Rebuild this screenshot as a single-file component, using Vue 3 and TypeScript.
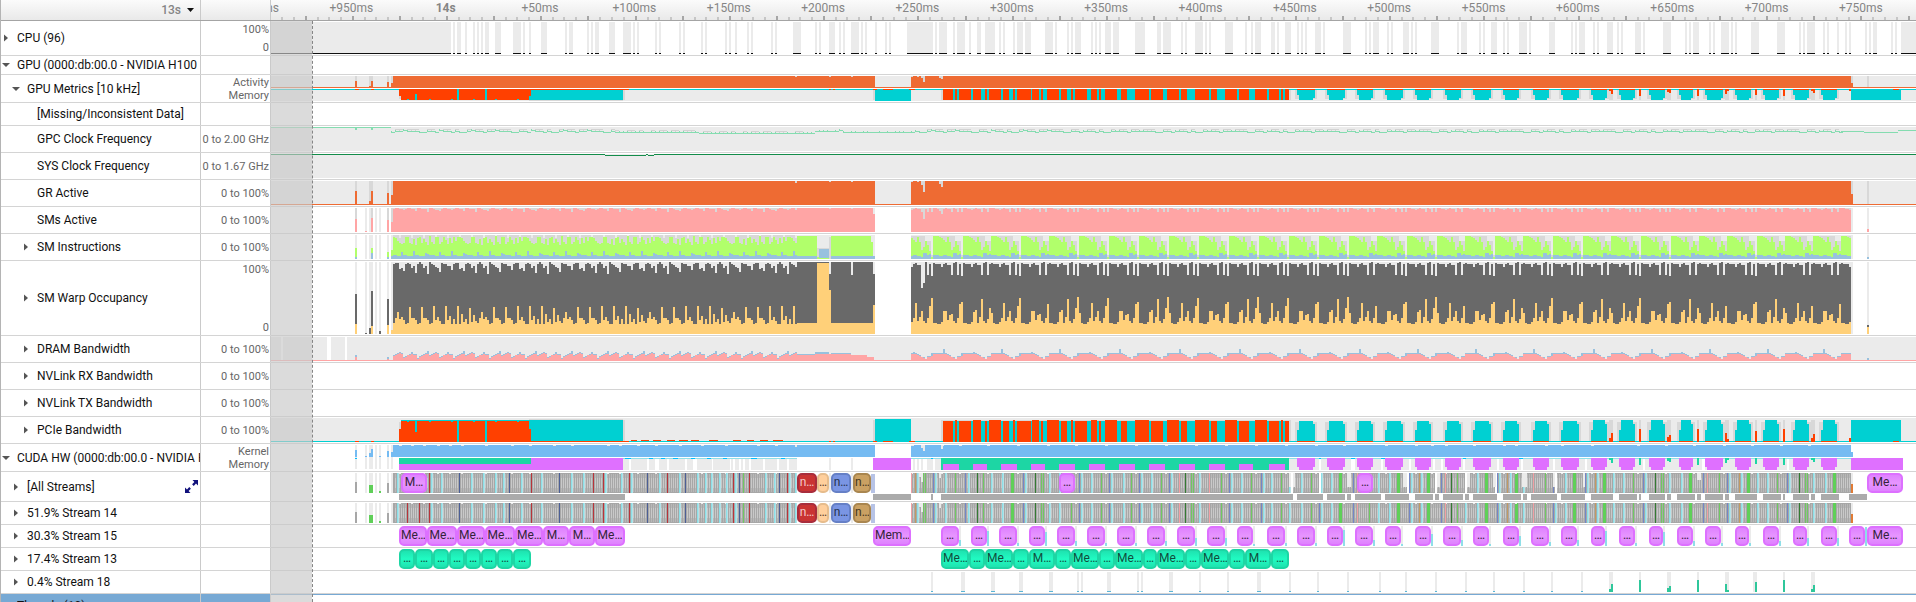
<script setup lang="ts">
interface Layer { fill: string; d: string }
interface Chip { x: number; end: number; text: string; kind: string; top: number }
interface Lane {
  id: string
  label: string
  depth: number
  toggle: '' | 'open' | 'closed'
  range: string[]
  height: number
  layers: Layer[]
  chips: Chip[]
}
interface Segment { from: number; to: number; red: boolean }

// Time axis in trace units: the visible window spans START..END.
const START = 271
const END = 1916
const SPAN = END - START
const BIN = 2

const LIGHT = '#ebebeb'
const SHADE = '#d8d8d8'
const ORANGE = '#ee6b33'
const PINK = '#ffa5a5'
const LIME = '#b1ff6b'
const STEEL = '#98c1de'
const DARK = '#696969'
const AMBER = '#ffd079'
const CYAN = '#00d0d2'
const RED = '#ff4000'
const SKY = '#75bbf2'
const VIOLET = '#df70ff'
const MINT = '#1dd6a4'
const AQUA = '#8fdfe8'

const box = (x: number, y: number, w: number, h: number): string => `M${x - START} ${y}h${w}v${h}h${-w}z`
const spans = (pairs: number[], y: number, h: number): string => {
  let d = ''
  for (let i = 0; i < pairs.length; i += 2) d += box(pairs[i], y, pairs[i + 1] - pairs[i], h)
  return d
}
const ticksAt = (xs: number[], w: number, y: number, h: number): string => xs.map(x => box(x, y, w, h)).join('')
const column = (x: number, base: number, h: number): string => (h > 0 ? box(x, base - h, BIN, h) : '')
const pick = (list: number[], i: number): number => list[((i % list.length) + list.length) % list.length]

// ---- CPU utilisation -------------------------------------------------
const cpuBusy: number[] = [
  271, 451, 453, 455, 457, 461, 465, 467, 473, 475, 477, 479, 481, 483, 485, 489, 495, 501, 513, 521, 523, 525,
  529, 531, 541, 547, 565, 567, 569, 573, 587, 589, 591, 593, 595, 599, 609, 615, 623, 631, 633, 635, 637, 639,
  655, 657, 659, 661, 679, 681, 683, 685, 701, 703, 705, 707, 725, 727, 729, 731, 735, 737, 747, 749, 751, 753,
  771, 773, 775, 777, 793, 801, 815, 817, 819, 821, 829, 835, 839, 841, 843, 845, 851, 859, 861, 863, 865, 867,
  875, 877, 885, 887, 889, 891, 907, 933, 935, 937, 939, 947, 953, 955, 957, 965, 969, 971, 977, 981, 985, 995,
  999, 1001, 1003, 1005, 1013, 1015, 1017, 1023, 1025, 1031, 1045, 1053, 1055, 1057, 1067, 1069, 1071, 1073,
  1075, 1081, 1091, 1093, 1095, 1097, 1099, 1101, 1105, 1111, 1113, 1119, 1135, 1145, 1157, 1161, 1163, 1171,
  1181, 1183, 1185, 1187, 1195, 1203, 1205, 1207, 1209, 1211, 1225, 1233, 1245, 1247, 1251, 1253, 1255, 1261,
  1271, 1275, 1277, 1279, 1285, 1291, 1297, 1299, 1301, 1303, 1305, 1307, 1315, 1321, 1323, 1325, 1343, 1351,
  1365, 1367, 1369, 1371, 1373, 1379, 1387, 1389, 1391, 1393, 1403, 1409, 1411, 1413, 1415, 1417, 1431, 1439,
  1457, 1459, 1461, 1467, 1479, 1481, 1483, 1485, 1491, 1497, 1503, 1505, 1507, 1509, 1519, 1527, 1529, 1531,
  1549, 1555, 1571, 1573, 1575, 1577, 1579, 1585, 1593, 1595, 1597, 1599, 1607, 1613, 1617, 1619, 1621, 1623,
  1635, 1641, 1643, 1645, 1663, 1671, 1685, 1687, 1689, 1691, 1693, 1699, 1709, 1711, 1713, 1715, 1721, 1729,
  1731, 1733, 1735, 1737, 1751, 1759, 1777, 1785, 1799, 1801, 1803, 1805, 1807, 1815, 1823, 1825, 1827, 1829,
  1837, 1839, 1845, 1847, 1849, 1851, 1865, 1867, 1869, 1871, 1873, 1877, 1891, 1893, 1895, 1897, 1901, 1916,
]

// ---- Iteration structure ---------------------------------------------
const steps: number[] = [
  903, 933, 963, 991, 1021, 1049, 1079, 1109, 1139, 1169, 1199, 1229, 1259, 1289, 1319, 1349, 1377, 1407, 1437,
  1465, 1495, 1523, 1553, 1583, 1611, 1641, 1671, 1699, 1727, 1757, 1785, 1813, 1841, 1871,
]
const decodeBins: { x: number; i: number; n: number }[] = []
for (let n = 0; n < steps.length - 1; n++) {
  for (let x = steps[n]; x < steps[n + 1]; x += BIN) {
    if (x >= 911 && x < 1851) decodeBins.push({ x, i: (x - steps[n]) / BIN, n })
  }
}
const warmBins: { x: number; i: number }[] = []
for (let x = 393; x < 797; x += BIN) warmBins.push({ x, i: (x - 393) / BIN })

const startup: number[] = [355, 365, 369, 371, 375, 379, 387, 391]
const startupWide = spans([355, 357, 365, 367, 369, 373, 375, 377, 379, 381, 387, 389, 391, 393], 0, 24)

const warmDrop = [1, 0, 0, 1, 1, 2, 1, 0, 0, 1, 1, 3, 0, 0, 1, 1, 1, 4, 0, 0, 1, 2, 2, 3]
const decodeDrop = [0, 0, 1, 1, 2, 1, 0, 1, 1, 4, 0, 1, 4, 0, 4]
const warmGreen = [22, 21, 18, 16, 15, 16, 22, 22, 16, 15, 20, 14, 21, 22, 16, 20, 17, 14, 23, 17, 15, 22, 22, 15, 17, 22, 19, 15, 21, 16, 22, 18, 22]
const decodeGreen = [23, 23, 23, 22, 21, 19, 17, 22, 17, 9, 12, 18, 14, 8, 2]
const warmBlue = [4, 4, 3, 3, 7, 4, 4, 3, 3, 3, 8, 4, 4, 3, 3, 3, 6, 5, 4]
const decodeBlue = [4, 4, 4, 3, 3, 4, 4, 3, 3, 2, 6, 6, 4, 5, 0]

const grBase = box(271, 23, 1645, 1)
const grBody = (h: number): string => {
  let d = box(393, 0, 482, h) + box(911, 0, 940, h) + box(1851, h * 0.55, 2, h * 0.45) + box(1853, h - 1, 63, 1)
  d += column(355, h, h * 0.6) + column(371, h, h * 0.6) + column(369, h, h * 0.15) + column(387, h, h * 0.5) + column(391, h, h * 0.4)
  return d
}
const grNotch = (h: number): string =>
  [[795, 2], [829, 1], [851, 1], [911, 1], [917, 1], [921, 4], [923, 11], [939, 3], [941, 6]]
    .map(([x, v]) => box(x, 0, BIN, Math.ceil((v * h) / 24))).join('')

const smsPink = warmBins.map(b => column(b.x, 24, 24 - pick(warmDrop, b.i))).join('')
  + box(797, 0, 76, 24) + box(873, 6, 2, 18)
  + decodeBins.map(b => column(b.x, 24, 24 - pick(decodeDrop, b.i))).join('')
  + column(355, 24, 13) + column(371, 24, 14) + column(387, 24, 12) + column(391, 24, 10) + column(365, 24, 1) + column(1867, 24, 3)

const lime = warmBins.map(b => column(b.x, 24, pick(warmGreen, b.i))).join('')
  + box(797, 1, 20, 23) + box(817, 22, 12, 2) + box(831, 1, 40, 23) + box(871, 7, 2, 17)
  + decodeBins.map(b => column(b.x, 24, pick(decodeGreen, b.i))).join('')
  + column(355, 24, 11) + column(371, 24, 11) + column(387, 24, 7) + column(391, 24, 9)
const steel = warmBins.map(b => column(b.x, 24, pick(warmBlue, b.i))).join('')
  + box(797, 21, 20, 3) + box(819, 14, 10, 9) + box(831, 21, 44, 3)
  + decodeBins.map(b => column(b.x, 24, pick(decodeBlue, b.i))).join('')
  + column(355, 24, 2) + column(371, 24, 6) + column(387, 24, 2) + column(391, 24, 3) + column(1867, 24, 2)

const WARP = 72
const warmDark = [2, 1, 1, 7, 6, 9, 2, 1, 2, 6, 4, 11, 2, 0, 2, 6, 4, 12, 0, 2, 3, 5, 6, 10, 1, 2, 2, 4, 4, 8]
const warmAmber = [11, 16, 22, 15, 17, 14, 10, 11, 27, 16, 16, 14, 10, 11, 27, 16, 16, 14, 10, 11, 28, 14, 17, 13, 10, 10, 28, 14, 18, 10, 15, 10, 28, 10, 20, 12, 15, 10, 26, 12, 19, 13]
const decodeDark = [1, 2, 2, 2, 5, 2, 1, 3, 3, 13, 1, 0, 13, 2, 14]
const decodeAmber: number[][] = [
  [21, 11, 10, 10, 12, 16, 31, 13, 17, 23, 13, 11, 16, 28, 36],
  [11, 11, 10, 10, 12, 23, 23, 14, 19, 20, 13, 11, 16, 30, 32],
  [11, 11, 10, 10, 12, 22, 24, 11, 17, 35, 13, 11, 15, 26, 37],
]
const warpDark = warmBins.map(b => column(b.x, WARP, WARP - pick(warmDark, b.i))).join('')
  + box(797, 0, 76, WARP) + box(873, 12, 2, 60)
  + decodeBins.map(b => column(b.x, WARP, WARP - pick(decodeDark, b.i) - (b.x === 923 ? 20 : 0))).join('')
  + column(355, WARP, 40) + column(371, WARP, 43) + column(387, WARP, 35) + column(369, WARP, 6) + column(365, WARP, 1) + column(379, WARP, 3) + column(1867, WARP, 9)
const warpAmber = warmBins.map(b => column(b.x, WARP, pick(warmAmber, b.i))).join('')
  + box(797, 61, 76, 11) + box(817, 1, 12, 71) + box(829, 28, 2, 44) + box(873, 43, 2, 29)
  + decodeBins.map(b => column(b.x, WARP, pick(decodeAmber[b.n % 3], b.i))).join('')
  + column(355, WARP, 10) + column(371, WARP, 8) + column(387, WARP, 9) + column(391, WARP, 4) + column(1867, WARP, 7)

const dramTotal = [6, 7, 8, 9, 8, 4, 5, 6, 7, 9, 7, 7, 3, 5, 6, 7, 8, 10]
const dramPink = [5, 6, 7, 8, 7, 3, 4, 6, 6, 7, 6, 6, 2, 4, 5, 6, 7, 7]
const decodeDramT = [8, 8, 8, 8, 8, 9, 8, 7, 6, 4, 4, 2, 5, 5, 8]
const decodeDramP = [7, 7, 7, 7, 7, 7, 7, 6, 5, 4, 3, 2, 4, 4, 5]
const dramBlue = warmBins.map(b => column(b.x, 24, pick(dramTotal, b.i))).join('')
  + box(797, 17, 40, 7) + box(815, 15, 14, 9) + box(831, 16, 20, 2)
  + decodeBins.map(b => column(b.x, 24, pick(decodeDramT, b.i) + (b.i === 5 && b.n % 2 ? 3 : 0))).join('')
  + column(355, 24, 6) + column(387, 24, 4) + column(1867, 24, 3)
const dramBody = box(271, 23, 1645, 1) + warmBins.map(b => column(b.x, 24, pick(dramPink, b.i))).join('')
  + box(797, 18, 40, 6) + box(815, 17, 36, 7) + box(851, 18, 16, 6) + box(867, 20, 7, 4)
  + decodeBins.map(b => column(b.x, 24, pick(decodeDramP, b.i))).join('')
  + column(355, 24, 4) + column(387, 24, 2)

// ---- Clock frequencies -----------------------------------------------
const wave = [5, 4, 4, 3, 4, 4, 4, 5, 5, 4, 4, 5, 3, 4, 4, 5, 4, 5, 5, 4, 3, 4, 4]
let gpcLine = box(271, 0, 120, 1) + box(355, 0, 2, 3) + box(371, 0, 2, 3)
let gpcShade = ''
for (let x = 391, i = 0; x < 1841; x += 4, i++) {
  const flat = (x > 697 && x < 815) ? 6 : (x > 817 && x < 833) ? 4 : (x >= 843 && x < 911) ? 5 : (x > 611 && x < 697) ? 5 : x > 1080 ? 4 + (pick(wave, i) > 4 ? 1 : 0) : pick(wave, i)
  gpcLine += box(x, flat, 4, 1)
  if (pick(wave, i) === 4 && (x < 800 || x > 920)) gpcShade += box(x, flat - 2, 4, 1) + box(x, flat - 2, 1, 2)
  if (pick(wave, i) !== pick(wave, i - 1)) gpcLine += box(x, flat - 1, 1, 2)
}
gpcLine += box(1841, 4, 23, 1) + box(1864, 5, 34, 1) + box(1898, 3, 18, 1)

// ---- PCIe traffic ----------------------------------------------------
const mixRed: number[] = [
  943, 953, 955, 957, 959, 971, 973, 981, 985, 987, 989, 1001, 1003, 1009, 1013, 1015, 1017, 1031, 1032, 1039,
  1041, 1043, 1047, 1059, 1061, 1067, 1071, 1073, 1075, 1087, 1091, 1097, 1099, 1101, 1105, 1117, 1121, 1127,
  1135, 1149, 1151, 1163, 1167, 1179, 1181, 1187, 1195, 1209, 1211, 1217, 1225, 1237, 1239, 1249, 1255, 1267,
  1269, 1279, 1281, 1283, 1285, 1289,
]
const blocks: number[][] = [
  [1297, 1315], [1327, 1345], [1357, 1373], [1385, 1403], [1415, 1431], [1445, 1461], [1473, 1491], [1503, 1519],
  [1533, 1549], [1561, 1579], [1591, 1607], [1619, 1635], [1649, 1665], [1679, 1693], [1705, 1723], [1735, 1751],
  [1763, 1779], [1793, 1809], [1821, 1837],
]
const smallRed: number[][] = [
  [1609, 4], [1611, 9], [1639, 13], [1667, 5], [1669, 7], [1697, 13], [1725, 9], [1727, 3], [1755, 11], [1783, 13], [1811, 4], [1813, 8],
]
// One builder serves both the full lane (bars grow upward) and the summary lane (bars hang down).
const pcie = (h: number, up: boolean): Layer[] => {
  const k = h / 24
  const bar = (x: number, w: number, v: number): string => {
    const s = Math.round(v * k)
    return up ? box(x, h - s, w, s) : box(x, 0, w, s)
  }
  const base = up ? h - 1 : 0
  let shade = bar(399, 2, 20) + bar(529, 94, 23) + bar(623, 2, 22) + bar(873, 2, 22) + bar(941, 350, 22)
  let cyan = box(271, base, 1645, 1) + bar(401, 130, 22) + bar(531, 92, 22) + bar(875, 36, 23) + bar(943, 346, 21) + bar(1851, 50, 22)
  let red = bar(399, 2, 13) + bar(1849, 2, 4)
  for (let x = 401; x < 529; x += BIN) if (x !== 457 && x !== 485) red += bar(x, BIN, x === 415 ? 10 : 21 - ((x * 7) % 11 === 0 ? 1 : 0))
  red += bar(529, 2, 13)
  for (let i = 0; i < mixRed.length; i += 2) red += bar(mixRed[i], mixRed[i + 1] - mixRed[i], i % 4 ? 22 : 21)
  for (const [a, b] of blocks) {
    shade += bar(a - 2, b - a + 4, 20)
    cyan += bar(a, 2, 12) + bar(a + 2, b - a - 4, b > 1590 ? 22 : 21) + bar(b - 2, 2, 18)
    red += box(a, base, b - a, 1)
  }
  for (const [x, v] of smallRed) {
    shade += bar(x, 2, 22)
    red += bar(x, 2, v)
  }
  cyan += [961, 989, 999, 1037, 1049, 1079, 1167, 1237].map(x => bar(x, 2, 6)).join('')
  red += spans([531, 629, 829, 831, 833, 835, 873, 877, 883, 893, 909, 915, 355, 359, 371, 374, 1893, 1899], base, 1)
  if (up) red += spans([631, 637, 641, 649, 653, 661, 667, 675, 679, 688, 691, 699, 709, 718, 733, 741, 747, 754, 760, 768, 773, 783], h - 2, 1)
  return [{ fill: LIGHT, d: box(271, 0, 1645, h) }, { fill: SHADE, d: shade }, { fill: CYAN, d: cyan }, { fill: RED, d: red }]
}

// ---- CUDA kernel / memory summary ------------------------------------
const chipsB: number[] = [
  941, 959, 971, 987, 999, 1017, 1029, 1045, 1057, 1075, 1087, 1105, 1117, 1135, 1147, 1165, 1177, 1195, 1207,
  1225, 1237, 1253, 1267, 1285,
]
const chipsC: number[] = [
  1297, 1315, 1327, 1343, 1355, 1373, 1385, 1401, 1415, 1431, 1443, 1461, 1473, 1489, 1503, 1519, 1531, 1549,
  1561, 1577, 1591, 1605, 1619, 1635, 1649, 1663, 1677, 1693, 1705, 1721, 1735, 1749, 1763, 1779, 1793, 1807,
  1821, 1837, 1849, 1865,
]
const kernelNotches: number[] = [399, 411, 423, 437, 449, 461, 485, 511, 529, 553, 571, 607, 619, 637, 655, 679, 701, 725, 757, 775, 911, 941, 959, 987, 1017, 1047, 1075, 1105, 1135, 1165, 1195, 1225, 1255, 1285, 1315, 1343, 1385, 1415, 1431, 1445, 1473, 1503, 1515, 1545, 1561, 1591, 1637, 1665, 1693, 1723, 1751, 1780, 1808]
const cudaLayers: Layer[] = [
  { fill: LIGHT, d: startupWide + spans([623, 629, 631, 647, 649, 655, 659, 667, 669, 685, 687, 693, 697, 712, 713, 730, 731, 733, 735, 739, 741, 743, 745, 749, 751, 763, 765, 777, 779, 787, 789, 797, 829, 831, 851, 853, 873, 875, 913, 915, 917, 919, 921, 923, 927, 933, 935, 941, 1289, 1319, 1321, 1351, 1355, 1381, 1383, 1409, 1411, 1433, 1435, 1441, 1443, 1463, 1465, 1497, 1499, 1521, 1523, 1553, 1555, 1585, 1587, 1643, 1645, 1702, 1705, 1787, 1789, 1867, 1851, 1853], 13, 12) },
  { fill: SKY, d: box(393, 0, 482, 12) + box(911, 0, 940, 12) + box(1851, 7, 2, 5) + column(355, 12, 7) + column(369, 12, 4) + column(371, 12, 8) + column(387, 12, 6) + column(391, 12, 5) + column(365, 12, 1) + column(379, 12, 1) },
  { fill: LIGHT, d: ticksAt(kernelNotches, 3, 0, 1) + box(795, 0, 2, 2) + box(921, 0, 2, 3) + box(923, 0, 2, 6) + box(941, 0, 2, 4) },
  { fill: AQUA, d: box(623, 13, 174, 1) + box(911, 13, 30, 1) + box(1289, 13, 562, 1) },
  { fill: '#00bfff', d: spans([355, 357, 625, 631, 649, 653, 661, 665, 673, 678, 691, 695, 707, 711, 723, 727, 751, 757, 781, 785, 931, 933, 1319, 1321, 1351, 1355, 1381, 1385, 1463, 1466, 1519, 1523], 13, 1) },
  { fill: VIOLET, d: box(399, 19, 132, 6) + box(531, 13, 92, 12) + box(873, 13, 38, 12) + box(1851, 13, 52, 12) + blocks.map(([a, b]) => box(a, 13, b - a, 9) + box(a + 2, 13, b - a - 4, 12)).join('') },
  { fill: MINT, d: box(399, 13, 132, 6) + box(941, 13, 348, 12) + smallRed.map(([x, v]) => box(x, 13, 2, Math.round(v / 2))).join('') },
  { fill: VIOLET, d: spans(chipsB.map((x, i) => (i % 2 ? x : x + 2)), 19, 6) },
  { fill: MINT, d: box(961, 13, 10, 11) },
]

// ---- Streams ---------------------------------------------------------
const marks: Record<string, number[]> = {
  '#8ce0e8': [397, 431, 441, 471, 483, 495, 503, 521, 541, 571, 583, 605, 621, 631, 659, 679, 697, 705, 711, 719, 726, 735, 765, 774, 789, 795, 917, 935, 945, 968, 991, 1002, 1025, 1049, 1059, 1081, 1091, 1111, 1123, 1141, 1151, 1171, 1199, 1231, 1241, 1263, 1271, 1289, 1301, 1321, 1331, 1378, 1389, 1411, 1421, 1465, 1477, 1499, 1510, 1523, 1555, 1565, 1587, 1597, 1613, 1623, 1645, 1669, 1681, 1729, 1741, 1757, 1767, 1789, 1813, 1825],
  '#b8343a': [407, 419, 429, 531, 593, 603, 629, 667, 733, 749, 787],
  '#4c5f96': [459, 509, 559, 647, 685, 739, 779],
  '#6fca60': [743, 923, 925, 955, 983, 1041, 1043, 1071, 1101, 1131, 1161, 1191, 1193, 1221, 1251, 1281, 1311, 1369, 1457, 1545, 1633, 1661, 1663, 1719, 1777, 1805, 1807],
  '#7386c8': [933, 965, 1023, 1079, 1109, 1139, 1169, 1229, 1261, 1319, 1353, 1409, 1441, 1497, 1553, 1585, 1643, 1703, 1727, 1787],
  '#f1a0a4': [911, 1179, 1209, 1357, 1445, 1533, 1707],
  '#c29a62': [915, 1419, 1507, 1595, 1739],
  '#347b32': [977, 1035, 1185, 1451, 1655, 1799],
}
const greenWide: number[] = [1011, 1339, 1397, 1427, 1485, 1515, 1573, 1603, 1689, 1747, 1833]
const stripes: number[] = []
for (let x = 395; x < 1851; x += 2) if (x < 797 || x > 911) stripes.push(x)
const streamBase = (gaps: boolean): Layer[] => {
  const out: Layer[] = [
    { fill: LIGHT, d: spans([355, 357, 365, 367, 369, 373, 375, 377, 379, 381, 387, 389, 391, 393, 829, 831, 851, 853, 1851, 1853], 0, 20) },
    { fill: '#a7a7a7', d: box(393, 0, 404, 20) + box(911, 0, 940, 20) + column(355, 20, 11) + column(387, 20, 10) },
    { fill: '#b8b8b8', d: ticksAt(stripes, 1, 1, 18) },
    { fill: '#c9c9c9', d: ticksAt(stripes, 1, 5, 10) },
    { fill: '#5fcf58', d: box(369, 12, 4, 8) + box(379, 18, 2, 2) + ticksAt(greenWide, 3, 0, 20) },
    { fill: LIGHT, d: ticksAt(kernelNotches, 2, 0, 1) + box(919, 0, 2, 4) + box(921, 0, 3, 9) + box(939, 0, 2, 5) },
  ]
  for (const fill of Object.keys(marks)) out.push({ fill, d: ticksAt(marks[fill], 1, 0, 20) })
  out.push({ fill: '#b3e2e8', d: ticksAt(marks['#8ce0e8'].map(x => x + 1), 1, 0, 20) })
  out.push({ fill: '#e07b35', d: box(1851, 11, 2, 9) })
  out.push({ fill: '#b7c3e6', d: box(871, 1, 4, 19) })
  if (gaps) {
    out.push({ fill: '#ffffff', d: spans([1291, 1293, 1319, 1321, 1407, 1409, 1435, 1437, 1465, 1467, 1495, 1497, 1555, 1557], 0, 20) })
    out.push({ fill: LIGHT, d: spans([1289, 1291, 1293, 1295, 1347, 1351, 1403, 1407, 1437, 1440, 1467, 1470, 1493, 1496, 1522, 1527, 1553, 1555, 1583, 1585], 0, 14) + box(1697, 0, 4, 7) })
  }
  return out
}
const bars: number[] = [
  399, 625, 873, 911, 931, 933, 941, 1293, 1297, 1323, 1327, 1345, 1347, 1351, 1355, 1381, 1385, 1409, 1415, 1433,
  1435, 1439, 1443, 1463, 1465, 1469, 1473, 1497, 1503, 1521, 1523, 1527, 1531, 1557, 1561, 1585, 1591, 1613, 1619,
  1637, 1639, 1641, 1649, 1665, 1667, 1671, 1677, 1695, 1697, 1701, 1705, 1723, 1725, 1729, 1735, 1757, 1763, 1781,
  1783, 1785, 1793, 1809, 1811, 1815, 1821, 1839, 1849, 1867,
]

const chain = (edges: number[], texts: string[], kind: string): Chip[] =>
  texts.map((text, i) => ({ x: edges[i], end: edges[i + 1], text, kind, top: 1 }))
const separate = (pairs: number[], kind: string): Chip[] => {
  const out: Chip[] = []
  for (let i = 0; i < pairs.length; i += 2) out.push({ x: pairs[i], end: pairs[i + 1], text: '…', kind, top: 1 })
  return out
}
const kernelChips: Chip[] = [
  { x: 797, end: 817, text: 'n…', kind: 'crimson', top: 1 },
  { x: 817, end: 829, text: '…', kind: 'peach', top: 1 },
  { x: 831, end: 851, text: 'n…', kind: 'blue', top: 1 },
  { x: 853, end: 871, text: 'n…', kind: 'tan', top: 1 },
]
const allChips: Chip[] = [
  { x: 401, end: 427, text: 'M…', kind: 'violet', top: 1 },
  ...kernelChips,
  { x: 1059, end: 1075, text: '…', kind: 'violet', top: 1 },
  { x: 1357, end: 1373, text: '…', kind: 'violet', top: 1 },
  { x: 1867, end: 1903, text: 'Me…', kind: 'violet', top: 1 },
]
const copyChips: Chip[] = [
  ...chain([399, 427, 457, 485, 515, 543, 569, 595, 625], ['Me…', 'Me…', 'Me…', 'Me…', 'Me…', 'M…', 'M…', 'Me…'], 'violet'),
  { x: 873, end: 911, text: 'Mem…', kind: 'violet', top: 1 },
  ...separate(chipsB, 'violet'),
  ...separate(chipsC, 'violet'),
  { x: 1867, end: 1903, text: 'Me…', kind: 'violet', top: 1 },
]
const mintChips: Chip[] = [
  ...chain([399, 415, 433, 449, 465, 481, 497, 513, 531], Array<string>(8).fill('…'), 'mint'),
  ...chain(
    [941, 969, 985, 1013, 1029, 1055, 1071, 1099, 1115, 1143, 1157, 1185, 1201, 1229, 1245, 1271, 1289],
    ['Me…', '…', 'Me…', '…', 'M…', '…', 'Me…', '…', 'Me…', '…', 'Me…', '…', 'Me…', '…', 'M…', '…'], 'mint'),
]
const tails = [...chipsB, ...chipsC].filter((_, i) => i % 2 === 1 && i < 62)
const tailHeights = [6, 15, 3, 14, 5, 3, 3, 5, 8, 8, 2, 3, 3, 16, 6, 2, 12, 6, 2, 10, 4]
const s18Light: number[] = [931, 933, 961, 965, 991, 995, 1019, 1023, 1049, 1053, 1077, 1079, 1081, 1083, 1107, 1111, 1137, 1139, 1141, 1143, 1169, 1173, 1199, 1201, 1227, 1229, 1257, 1261, 1289, 1291, 1317, 1319, 1347, 1349, 1379, 1381, 1405, 1407, 1435, 1437, 1465, 1467, 1493, 1495, 1523, 1525, 1551, 1553, 1581, 1583, 1609, 1613, 1639, 1641, 1667, 1671, 1697, 1699, 1725, 1729, 1753, 1757, 1783, 1785, 1811, 1815]

const lane = (
  id: string, label: string, depth: number, toggle: Lane['toggle'], range: string[], height: number,
  layers: Layer[] = [], chips: Chip[] = [],
): Lane => ({ id, label, depth, toggle, range, height, layers, chips })

const lanes: Lane[] = [
  lane('cpu', 'CPU (96)', 0, 'closed', ['100%', '0'], 35, [
    { fill: LIGHT, d: spans(cpuBusy, 0, 32) }, { fill: '#111', d: spans(cpuBusy, 31, 1) }]),
  lane('gpu', 'GPU (0000:db:00.0 - NVIDIA H100', 0, 'open', [], 19),
  lane('metrics', 'GPU Metrics [10 kHz]', 1, 'open', ['Activity', 'Memory'], 28, [
    { fill: LIGHT, d: box(271, 0, 1645, 12) },
    { fill: SHADE, d: spans([355, 357, 369, 373, 387, 389, 391, 393, 1851, 1853, 1867, 1869], 0, 12) },
    { fill: ORANGE, d: grBody(12) + box(271, 11, 1645, 1) },
    { fill: SHADE, d: grNotch(12) }]),
  lane('missing', '[Missing/Inconsistent Data]', 2, '', [], 23),
  lane('gpc', 'GPC Clock Frequency', 2, '', ['0 to 2.00 GHz'], 27, [
    { fill: LIGHT, d: box(271, 0, 1645, 24) }, { fill: '#d2d2d2', d: gpcShade }, { fill: '#84dcb0', d: gpcLine }]),
  lane('sys', 'SYS Clock Frequency', 2, '', ['0 to 1.67 GHz'], 27, [
    { fill: LIGHT, d: box(271, 0, 1645, 24) },
    { fill: '#128c49', d: box(271, 0, 334, 1) + box(605, 1, 41, 1) + box(646, 0, 2, 1) + box(648, 1, 6, 1) + box(654, 0, 1262, 1) }]),
  lane('gr', 'GR Active', 2, '', ['0 to 100%'], 27, [
    { fill: LIGHT, d: box(271, 0, 1645, 24) },
    { fill: SHADE, d: spans([355, 357, 369, 373, 387, 389, 391, 393, 1851, 1853, 1867, 1869], 0, 24) },
    { fill: ORANGE, d: grBase + grBody(24) }, { fill: SHADE, d: grNotch(24) }]),
  lane('sms', 'SMs Active', 2, '', ['0 to 100%'], 27, [
    { fill: LIGHT, d: startupWide + box(871, 0, 4, 24) + box(1851, 0, 2, 24) + box(1867, 0, 2, 24) },
    { fill: SHADE, d: box(393, 0, 478, 24) + box(911, 0, 940, 24) + ticksAt([355, 371, 387, 391], 2, 0, 24) },
    { fill: PINK, d: smsPink },
    { fill: SHADE, d: grNotch(24) }]),
  lane('smi', 'SM Instructions', 2, 'closed', ['0 to 100%'], 27, [
    { fill: LIGHT, d: startupWide + box(393, 0, 482, 24) + box(911, 0, 942, 24) + box(1867, 0, 2, 24) },
    { fill: SHADE, d: warmBins.map(b => column(b.x, 24, b.i % 6 === 3 ? 21 : 24)).join('') + decodeBins.map(b => column(b.x, 24, b.i === 14 ? 4 : b.i > 10 ? 18 : 23)).join('') + box(817, 13, 14, 11) + box(829, 2, 2, 22) },
    { fill: LIME, d: lime }, { fill: STEEL, d: steel }]),
  lane('warp', 'SM Warp Occupancy', 2, 'closed', ['100%', '0'], 75, [
    { fill: LIGHT, d: spans([355, 357, 365, 367, 369, 373, 375, 377, 379, 381, 387, 389, 391, 875, 911, 1853, 1867, 1869], 0, WARP) },
    { fill: DARK, d: warpDark }, { fill: LIGHT, d: box(829, 0, 2, 12) + box(851, 0, 2, 13) + box(921, 0, 2, 26) }, { fill: AMBER, d: warpAmber }]),
  lane('dram', 'DRAM Bandwidth', 2, 'closed', ['0 to 100%'], 27, [
    { fill: LIGHT, d: spans([271, 281, 283, 327, 331, 345, 347, 1916], 0, 24) },
    { fill: STEEL, d: dramBlue }, { fill: PINK, d: dramBody }]),
  lane('nvrx', 'NVLink RX Bandwidth', 2, 'closed', ['0 to 100%'], 27),
  lane('nvtx', 'NVLink TX Bandwidth', 2, 'closed', ['0 to 100%'], 27),
  lane('pcie', 'PCIe Bandwidth', 2, 'closed', ['0 to 100%'], 27, pcie(24, true)),
  lane('cuda', 'CUDA HW (0000:db:00.0 - NVIDIA H100', 0, 'open', ['Kernel', 'Memory'], 28, cudaLayers),
  lane('all', '[All Streams]', 1, 'closed', [], 30, [...streamBase(true), { fill: '#ababab', d: spans(bars, 21, 6) }], allChips),
  lane('s14', '51.9% Stream 14', 1, 'closed', [], 23, streamBase(false), kernelChips),
  lane('s15', '30.3% Stream 15', 1, 'closed', [], 23, [
    { fill: LIGHT, d: ticksAt(tails, 2, 0, 20) },
    { fill: AQUA, d: tails.map((x, i) => column(x, 20, pick(tailHeights, i))).join('') + box(1865, 1, 2, 19) }], copyChips),
  lane('s13', '17.4% Stream 13', 1, 'closed', [], 23, [], mintChips),
  lane('s18', '0.4% Stream 18', 1, 'closed', [], 23, [
    { fill: LIGHT, d: spans(s18Light, 0, 20) },
    { fill: '#5ab6d6', d: spans(s18Light.slice(0, 50), 19, 1) },
    { fill: '#2fc79b', d: smallRed.map(([x, v]) => column(x, 20, v - 1)).join('') }]),
]
const memoryLayers = pcie(12, false)
const bodyHeight = (l: Lane): number => l.height - 2

const percent = (x: number): string => `${((x - START) / SPAN) * 100}%`
const chipStyle = (c: Chip) => ({ left: percent(c.x), width: `${((c.end - c.x) / SPAN) * 100}%` })

const labels: { text: string; x: number }[] = ['+900ms', '+950ms', '14s', ...Array.from({ length: 15 }, (_, i) => `+${(i + 1) * 50}ms`)]
  .map((text, i) => ({ text, x: 257 + i * 94.35 }))
const majors = Array.from({ length: 35 }, (_, i) => Math.round(304.5 + i * 47.15))
const minors = majors.flatMap(x => [x - 24, x - 12, x + 12]).filter(x => x > START)
</script>

<template>
  <main class="timeline">
    <header class="row ruler">
      <div class="corner">
        <button class="unit" type="button">13s
          <svg class="drop" viewBox="0 0 7 4"><path d="M0 0h7L3.500 4z" /></svg>
        </button>
      </div>
      <div class="corner"></div>
      <div class="track scale">
        <span v-for="l in labels" :key="l.text" class="stamp" :class="{ strong: l.text === '14s' }" :style="{ left: percent(l.x) }">{{ l.text }}</span>
        <svg class="ticks" :viewBox="`0 0 ${SPAN} 4`" preserveAspectRatio="none">
          <path fill="#c6c6c6" :d="ticksAt(minors, 2, 1, 3)" />
          <path fill="#a6a6a6" :d="ticksAt(majors, 2, 0, 4)" />
        </svg>
      </div>
    </header>

    <section class="lanes">
      <div v-for="l in lanes" :key="l.id" class="row" :class="l.id" :style="{ height: `${l.height}px` }">
        <div class="name" :class="`depth${l.depth}`">
          <button v-if="l.toggle" class="toggle" type="button" :aria-label="`Toggle ${l.label}`">
            <svg v-if="l.toggle === 'open'" viewBox="0 0 8 8"><path d="M0 2h8L4 6z" /></svg>
            <svg v-else viewBox="0 0 8 8"><path d="M2 0.500v7L6 4z" /></svg>
          </button>
          <span class="label">{{ l.label }}</span>
          <button v-if="l.id === 'all'" class="expand" type="button" aria-label="Expand streams">
            <svg viewBox="0 0 13 13"><path d="M7.500 0H13v5.500L11 3.600 8.700 5.900 7.100 4.300 9.400 2zM0 7.500v5.500h5.500L3.600 11 5.900 8.700 4.300 7.100 2 9.400z" /></svg>
          </button>
        </div>
        <div class="range" :class="{ pair: l.range.length === 2 }"><span v-for="r in l.range" :key="r">{{ r }}</span></div>
        <div class="track">
          <svg v-if="l.layers.length" class="plot" :viewBox="`0 0 ${SPAN} ${bodyHeight(l)}`" :style="{ height: `${bodyHeight(l)}px` }" preserveAspectRatio="none">
            <path v-for="(p, i) in l.layers" :key="i" :fill="p.fill" :d="p.d" />
            <g v-if="l.id === 'metrics'" transform="translate(0 13)">
              <path v-for="(p, i) in memoryLayers" :key="i" :fill="p.fill" :d="p.d" />
            </g>
          </svg>
          <span v-for="(c, i) in l.chips" :key="`c${i}`" class="chip" :class="c.kind" :style="chipStyle(c)">{{ c.text }}</span>
        </div>
      </div>
      <div class="row threads">
        <div class="name depth0">
          <button class="toggle" type="button" aria-label="Toggle Threads"><svg viewBox="0 0 8 8"><path d="M2 0.500v7L6 4z" /></svg></button>
          <span class="label">Threads (10)</span>
        </div>
        <div class="range"></div>
        <div class="track"></div>
      </div>
      <div class="shade-area"><div class="outside" :style="{ width: percent(313) }"></div></div>
    </section>
  </main>
</template>

<style>
body { margin: 0; }
</style>

<style scoped>
.timeline {
  display: flex;
  flex-direction: column;
  height: 100vh;
  overflow: hidden;
  box-sizing: border-box;
  border-left: 1px solid #b4b4b4;
  background: #fff;
  color: #111;
  font: 12px/16px Roboto, "Liberation Sans", sans-serif;
}
button { padding: 0; border: 0; background: none; font: inherit; color: inherit; }
.row {
  display: grid;
  grid-template-columns: 200px 70px minmax(0, 1fr);
  flex: none;
  box-sizing: border-box;
  border-bottom: 1px solid #d4d4d4;
}
.ruler {
  height: 21px;
  border-bottom-color: #a4a4a4;
  background: linear-gradient(#fbfbfb, #e9e9e9);
  color: #858585;
}
.corner { display: flex; justify-content: flex-end; border-right: 1px solid #cacaca; }
.unit { display: flex; align-items: center; gap: 6px; margin-right: 6px; color: #858585; font-weight: 500; }
.drop { width: 7px; height: 4px; fill: #111; }
.scale { overflow: hidden; }
.stamp { position: absolute; top: 0; transform: translateX(-50%); line-height: 17px; white-space: nowrap; }
.strong { font-weight: 700; }
.ticks { position: absolute; bottom: 0; left: 0; width: 100%; height: 4px; shape-rendering: crispEdges; }
.lanes { position: relative; display: flex; flex-direction: column; flex: 1; min-height: 0; overflow: hidden; }
.name {
  display: flex;
  align-items: center;
  min-width: 0;
  overflow: hidden;
  border-right: 1px solid #cacaca;
  white-space: nowrap;
}
.depth0 { padding-left: 1px; }
.depth1 { padding-left: 11px; }
.depth2 { padding-left: 21px; }
.toggle { flex: none; width: 8px; height: 8px; margin-right: 7px; }
.toggle svg { display: block; width: 8px; height: 8px; fill: #555; }
.depth2 .label:first-child { margin-left: 15px; }
.label { flex: 1; min-width: 0; overflow: hidden; }
.expand { flex: none; width: 13px; height: 13px; margin-right: 2px; }
.expand svg { display: block; fill: #11117c; }
.range {
  display: flex;
  flex-direction: column;
  justify-content: center;
  align-items: flex-end;
  padding-right: 1px;
  border-right: 1px solid #cacaca;
  color: #666;
  font-size: 11px;
  line-height: 13px;
  white-space: nowrap;
}
.cpu .pair, .warp .pair { justify-content: space-between; padding-top: 2px; padding-bottom: 1px; }
.track { position: relative; min-width: 0; }
.plot { display: block; width: 100%; margin-top: 1px; shape-rendering: crispEdges; }
.chip {
  position: absolute;
  top: 1px;
  height: 20px;
  box-sizing: border-box;
  overflow: hidden;
  border: 2px solid;
  border-radius: 5px;
  font-size: 12px;
  line-height: 15px;
  text-align: center;
  white-space: nowrap;
  color: #34233a;
}
.violet { border-color: #dd70ff; background: linear-gradient(#df82ff, #e795ff 50%, #df82ff); }
.mint { border-color: #1dd6a4; background: linear-gradient(#1fe3b0, #20fbc2 50%, #1fe3b0); color: #124c3c; }
.crimson { border-color: #a82d3c; background: #c93333; color: #f5caca; }
.peach { border-color: #e6bc8c; background: #ffcf9c; color: #54402c; }
.blue { border-color: #6680c6; background: #7a95e3; color: #24304e; }
.tan { border-color: #a98650; background: #caa163; color: #43351e; }
.threads { height: 23px; border: 0; }
.threads .name, .threads .range { background: #77a9d4; }
.threads .track { border-top: 1px solid #77a9d4; }
.shade-area { position: absolute; top: 0; bottom: 0; left: 270px; right: 0; pointer-events: none; }
.outside { height: 100%; box-sizing: border-box; border-right: 1px dashed #858585; background: rgba(200, 200, 200, 0.65); background-clip: padding-box; }
</style>
